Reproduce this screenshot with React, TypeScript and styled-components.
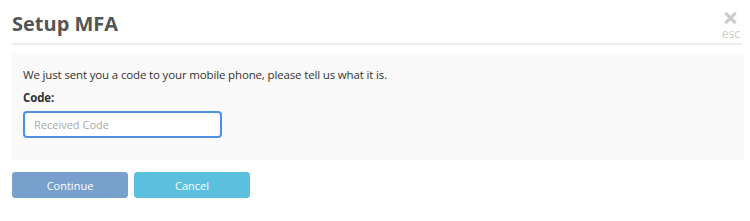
import React from "react";
import styled, { createGlobalStyle } from "styled-components";

const GlobalStyle = createGlobalStyle`
  html, body {
    margin: 0;
    padding: 0;
    background: #ffffff;
    font-family: "Open Sans", "Noto Sans", sans-serif;
  }
`;

const Modal = styled.div`
  width: 750px;
  height: 221px;
  box-sizing: border-box;
  padding: 0 6px 0 12px;
`;

const Header = styled.div`
  display: flex;
  justify-content: space-between;
  align-items: flex-start;
  height: 45px;
  border-bottom: 2px solid #ececec;
  box-sizing: border-box;
  margin-right: 2px;
`;

const Title = styled.h1`
  margin: 9px 0 0;
  font-size: 20px;
  font-weight: 700;
  line-height: 30px;
  color: #555555;
`;

const Close = styled.button`
  display: flex;
  flex-direction: column;
  align-items: center;
  border: none;
  background: none;
  padding: 0;
  margin: 12px 2px 0 0;
  cursor: pointer;
  color: #cccccc;
  font-family: inherit;
`;

const Esc = styled.span`
  font-size: 12px;
  line-height: 12px;
  margin-top: 4px;
`;

const Panel = styled.div`
  margin-top: 9px;
  height: 106px;
  box-sizing: border-box;
  padding: 12px 11px 0;
  background: #f9f9f9;
`;

const Message = styled.p`
  margin: 0;
  font-size: 11.5px;
  letter-spacing: -0.15px;
  line-height: 18px;
  color: #333333;
`;

const Label = styled.label`
  display: block;
  margin-top: 5px;
  font-size: 11.5px;
  letter-spacing: -0.15px;
  font-weight: 700;
  line-height: 18px;
  color: #333333;
`;

const Input = styled.input`
  display: block;
  margin-top: 4px;
  width: 199px;
  height: 27px;
  box-sizing: border-box;
  padding: 0 9px;
  border: 2px solid #4d90e0;
  border-radius: 4px;
  background: #ffffff;
  font-family: inherit;
  font-size: 11px;
  color: #333333;
  outline: none;
  &::placeholder {
    color: #a8a8a8;
  }
`;

const Actions = styled.div`
  display: flex;
  gap: 6px;
  margin-top: 12px;
`;

const Button = styled.button<{ $tone: string }>`
  width: 116px;
  height: 26px;
  border: 1px solid ${(p) => p.$tone};
  border-radius: 3px;
  background: ${(p) => p.$tone};
  color: #ffffff;
  font-family: inherit;
  font-size: 11px;
  cursor: pointer;
`;

export default function App() {
  return (
    <>
      <GlobalStyle />
      <Modal>
        <Header>
          <Title>Setup MFA</Title>
          <Close aria-label="close">
            <svg width="13" height="12" viewBox="0 0 13 12">
              <path
                d="M2.5 2 L10.5 10 M10.5 2 L2.5 10"
                stroke="#cccccc"
                strokeWidth="3.2"
                strokeLinecap="square"
              />
            </svg>
            <Esc>esc</Esc>
          </Close>
        </Header>
        <Panel>
          <Message>
            We just sent you a code to your mobile phone, please tell us what it is.
          </Message>
          <Label htmlFor="code">Code:</Label>
          <Input id="code" placeholder="Received Code" autoFocus />
        </Panel>
        <Actions>
          <Button $tone="#77a0cc">Continue</Button>
          <Button $tone="#5bc0de">Cancel</Button>
        </Actions>
      </Modal>
    </>
  );
}
